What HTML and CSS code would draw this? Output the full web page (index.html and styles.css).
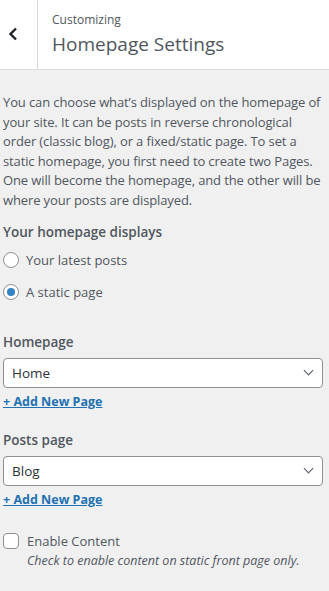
FILE: index.html
```html
<!DOCTYPE html>
<html lang="en">
<head>
    <meta charset="UTF-8">
    <meta name="viewport" content="width=device-width, initial-scale=1.0">
    <title>Homepage Settings</title>
    <link rel="stylesheet" href="styles.css">
</head>
<body>
    <div class="section-header">
        <button class="back-btn" aria-label="Back">
            <svg width="12" height="14" viewBox="0 0 12 14"><path d="M9 1.5 L3.5 7 L9 12.5" fill="none" stroke="#1d2327" stroke-width="2.4"/></svg>
        </button>
        <div class="section-title">
            <span class="crumb">Customizing</span>
            <h3>Homepage Settings</h3>
        </div>
    </div>

    <div class="controls">
        <p class="description">You can choose what’s displayed on the homepage of your site. It can be posts in reverse chronological order (classic blog), or a fixed/static page. To set a static homepage, you first need to create two Pages. One will become the homepage, and the other will be where your posts are displayed.</p>

        <div class="control radio-control">
            <span class="control-title">Your homepage displays</span>
            <label class="radio-row"><span class="radio"></span>Your latest posts</label>
            <label class="radio-row"><span class="radio checked"></span>A static page</label>
        </div>

        <div class="control">
            <span class="control-title">Homepage</span>
            <div class="select">Home<span class="chevron"></span></div>
            <a class="add-new" href="#">+ Add New Page</a>
        </div>

        <div class="control">
            <span class="control-title">Posts page</span>
            <div class="select">Blog<span class="chevron"></span></div>
            <a class="add-new" href="#">+ Add New Page</a>
        </div>

        <div class="control check-control">
            <label class="check-row"><span class="checkbox"></span>Enable Content</label>
            <span class="check-desc">Check to enable content on static front page only.</span>
        </div>
    </div>
</body>
</html>
```

FILE: styles.css
```css
body {
    margin: 0;
    background: #f0f0f1;
    font-family: "Open Sans", "Noto Sans", sans-serif;
    font-size: 13px;
    color: #50575e;
}

.section-header {
    display: flex;
    height: 69px;
    background: #fff;
    border-bottom: 1px solid #dcdcde;
}

.back-btn {
    width: 38px;
    border: none;
    border-right: 1px solid #dcdcde;
    background: #fff;
    padding: 0 0 2px 7px;
    display: flex;
    align-items: center;
    justify-content: flex-start;
}

.section-title {
    padding: 11px 14px 0;
}

.crumb {
    display: block;
    font-size: 12px;
    line-height: 18px;
}

.section-title h3 {
    margin: 0;
    font-size: 19px;
    font-weight: 400;
    line-height: 30px;
}

.controls {
    padding: 23px 4px 0 3px;
}

.description {
    margin: 0 0 10px;
    font-size: 13px;
    line-height: 19.5px;
    letter-spacing: -0.12px;
}

.control {
    margin-bottom: 16px;
    margin-right: 2px;
}

.radio-control {
    margin-bottom: 22px;
}

.control-title {
    display: block;
    font-size: 13.5px;
    font-weight: 600;
    line-height: 24px;
    color: #50575e;
}

.radio-row {
    display: flex;
    align-items: center;
    gap: 7px;
    height: 32px;
}

.radio {
    width: 14px;
    height: 14px;
    border: 1px solid #8c8f94;
    border-radius: 50%;
    background: #fff;
    display: flex;
    align-items: center;
    justify-content: center;
}

.radio.checked::after {
    content: "";
    width: 8px;
    height: 8px;
    border-radius: 50%;
    background: #3582c4;
}

.select {
    position: relative;
    height: 28px;
    margin-top: 4px;
    border: 1px solid #8c8f94;
    border-radius: 4px;
    background: #fff;
    padding-left: 8px;
    font-size: 13.5px;
    line-height: 28px;
    color: #2c3338;
}

.chevron {
    position: absolute;
    right: 10px;
    top: 8px;
    width: 6px;
    height: 6px;
    border-right: 1.5px solid #50575e;
    border-bottom: 1.5px solid #50575e;
    transform: rotate(45deg);
}

.add-new {
    display: inline-block;
    margin-top: 4px;
    font-size: 12.5px;
    font-weight: 700;
    line-height: 20px;
    color: #2271b1;
}

.check-control {
    margin-top: 21px;
}

.check-row {
    display: flex;
    align-items: center;
    gap: 8px;
    line-height: 20px;
}

.checkbox {
    width: 14px;
    height: 14px;
    border: 1px solid #8c8f94;
    border-radius: 4px;
    background: #fff;
}

.check-desc {
    display: block;
    padding-left: 24px;
    font-style: italic;
    font-size: 12.5px;
    line-height: 20px;
}
```
